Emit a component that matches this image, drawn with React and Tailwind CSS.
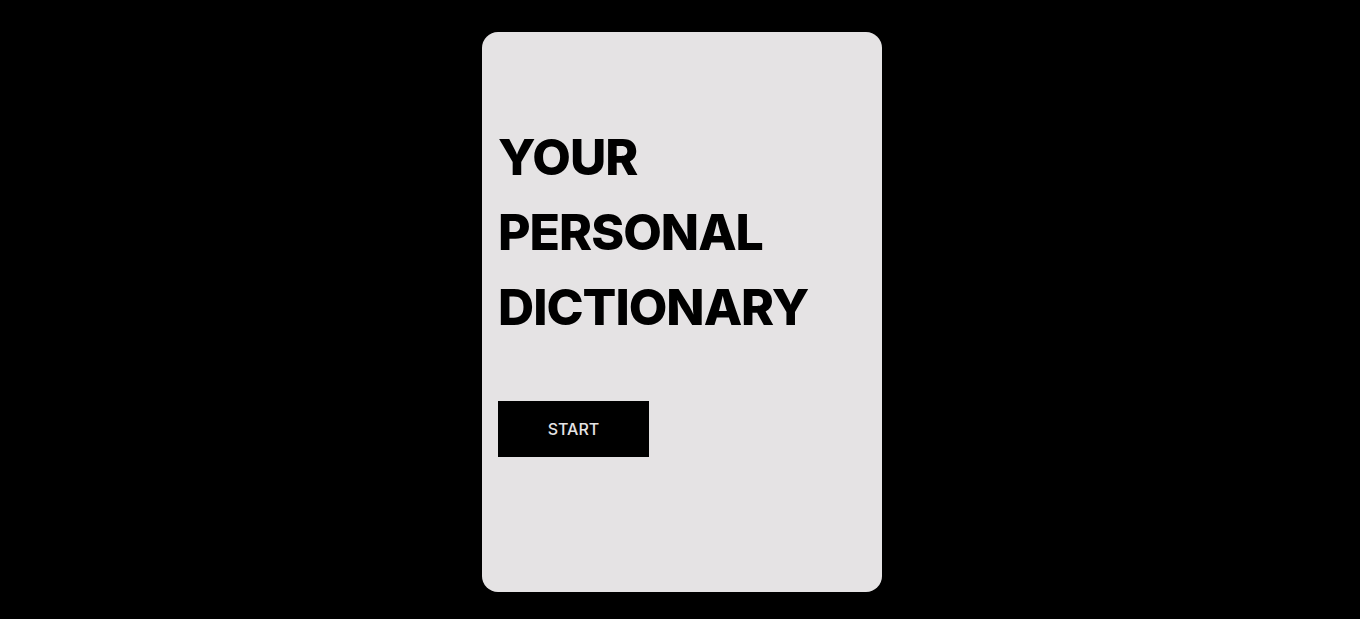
export default function App() {
  return (
    <div className="min-h-[619px] w-full bg-black flex justify-center pl-[4px]" style={{ fontFamily: "Inter, 'Noto Sans', sans-serif" }}>
      <div className="mt-8 w-[400px] h-[560px] rounded-2xl bg-[#e5e3e4] px-4 pt-[88px] flex flex-col items-start">
        <h1 className="text-[50px] leading-[75px] font-extrabold tracking-[-1px] text-black">
          YOUR
          <br />
          PERSONAL
          <br />
          DICTIONARY
        </h1>
        <button className="mt-[56px] w-[151px] h-[56px] bg-black text-[#e5e3e4] text-[16px] font-medium">
          START
        </button>
      </div>
    </div>
  );
}
